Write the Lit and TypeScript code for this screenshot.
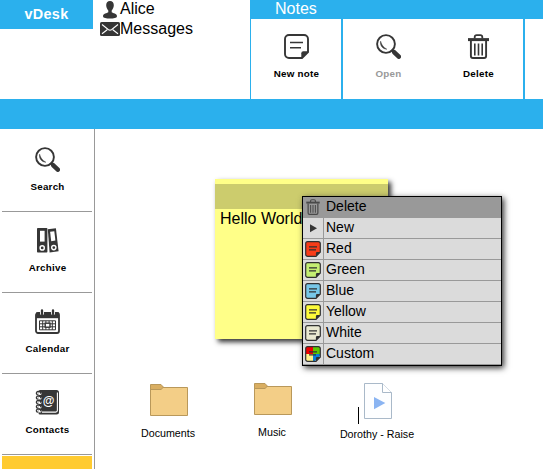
import { LitElement, html, css, svg } from "lit";
import { customElement } from "lit/decorators.js";
import { classMap } from "lit/directives/class-map.js";

const INK = "#363636";

const frame = (w: number, h: number, body: unknown) =>
  html`<svg width=${w} height=${h} viewBox="0 0 ${w} ${h}" fill="none">${body}</svg>`;

const searchIcon = frame(25, 25, svg`
  <circle cx="10" cy="10" r="8.9" stroke=${INK} stroke-width="1.9"/>
  <path d="M4.6 7.2C3.8 11.5 6.6 15 10.8 15.2C8 13.6 5.6 11.5 4.6 7.2Z" fill=${INK} stroke=${INK} stroke-width=".5"/>
  <path d="M15.5 15.8L18.5 18.6" stroke=${INK} stroke-width="2.6"/>
  <path d="M18.3 18.3L22.8 22.6" stroke=${INK} stroke-width="4.6" stroke-linecap="round"/>`);

const noteIcon = frame(25, 25, svg`
  <path d="M5 1H20A4 4 0 0 1 24 5V18L18 24H5A4 4 0 0 1 1 20V5A4 4 0 0 1 5 1Z" stroke=${INK} stroke-width="1.9"/>
  <path d="M24.5 17.3L17.3 24.5V19.3A2 2 0 0 1 19.3 17.3Z" fill=${INK}/>
  <path d="M6 8.5H19M6 13.7H17" stroke=${INK} stroke-width="1.5"/>`);

const trash = (w: number, h: number) => html`<svg width=${w} height=${h} viewBox="0 0 21 25" fill="none">
  <path d="M6.7 4.5V3A2 2 0 0 1 8.7 1.1H12.3A2 2 0 0 1 14.3 3V4.5" stroke=${INK} stroke-width="1.8"/>
  <path d="M0 5.6H21" stroke=${INK} stroke-width="3"/>
  <path d="M2.9 7V22A2 2 0 0 0 4.9 24H16.1A2 2 0 0 0 18.1 22V7" stroke=${INK} stroke-width="1.9"/>
  <path d="M6.8 9.5V21.5M10.5 9.5V21.5M14.2 9.5V21.5" stroke=${INK} stroke-width="1.6"/></svg>`;

const archiveIcon = frame(24, 25, svg`<g transform="translate(2 0)">
  <rect x="0" y="0" width="10.4" height="24.5" rx=".8" fill=${INK}/>
  <rect x="3" y="2.8" width="4.6" height="10.8" fill="#fff"/>
  <circle cx="5.2" cy="19.9" r="2.1" stroke="#fff" stroke-width="1.4"/>
  <path d="M10.8 1.2L18.9 .3L21.6 23.3L12.6 24.5Z" fill=${INK}/>
  <path d="M13.1 3.7L17.3 3.2L18.4 12.6L14.2 13.2Z" fill="#fff"/>
  <circle cx="16.8" cy="19.6" r="2.1" stroke="#fff" stroke-width="1.4"/></g>`);

const calendarIcon = frame(25, 25, svg`
  <rect x="1" y="4" width="23" height="20" rx="2" fill="#fff" stroke=${INK} stroke-width="1.8"/>
  <path d="M1 3.5H24V9.2H1Z" fill=${INK}/>
  <path d="M7 0V5.4M18 0V5.4" stroke="#fff" stroke-width="4"/>
  <path d="M7 1.3V5M18 1.3V5" stroke=${INK} stroke-width="2.3" stroke-linecap="round"/>
  <path d="M4.5 11.8H20.5V20.8H4.5ZM4.5 14.8H20.5M4.5 17.8H20.5M7.7 11.8V20.8M10.9 11.8V20.8M14.1 11.8V20.8M17.3 11.8V20.8" stroke=${INK} stroke-width="1"/>
  <rect x="10.2" y="14.2" width="4.8" height="4" fill="#fff" stroke=${INK} stroke-width="1.4"/>`);

const contactsIcon = frame(25, 25, svg`
  <path d="M5 0H21.5A2.5 2.5 0 0 1 24 2.5V22A2.5 2.5 0 0 1 21.5 24.5H5A1.5 1.5 0 0 1 3.5 23V1.5A1.5 1.5 0 0 1 5 0Z" fill=${INK}/>
  <path d="M22.4 2.5V20.3A1.8 1.8 0 0 1 20.6 22.1H7" stroke="#fff" stroke-width="1.1"/>
  ${[3.5, 8, 12.5, 17, 21].map((y) => svg`
    <circle cx="5" cy=${y} r="1.6" fill="#fff"/>
    <path d="M5.6 ${y + 0.4}A2.2 1.7 0 1 0 2.8 ${y + 1.3}" stroke=${INK} stroke-width="1.3"/>`)}
  <text x="13.6" y="15" text-anchor="middle" class="at">@</text>`);

const personIcon = frame(14, 18, svg`
  <path d="M7 0C9.5 0 11 1.8 10.8 4.6C10.7 6.7 9.7 8.5 8.7 9.5V11.3C10 12.3 14 12.5 14 15.2C14 17 10.5 17.6 7 17.6C3.5 17.6 0 17 0 15.2C0 12.5 4 12.3 5.3 11.3V9.5C4.3 8.5 3.3 6.7 3.2 4.6C3 1.8 4.5 0 7 0Z" fill=${INK}/>`);

const mailIcon = frame(20, 14, svg`
  <rect width="20" height="14" rx="1.6" fill=${INK}/>
  <path d="M2 2.5L8.2 7.5Q10 8.8 11.8 7.5L18 2.5M2 11.8L7.2 7.8M18 11.8L12.8 7.8" stroke="#fff" stroke-width="1.1"/>`);

const playIcon = frame(16, 16, svg`<path d="M5 4.3L12 8.2L5 12.2Z" fill=${INK}/>`);

const swatch = (fill: string) => frame(16, 16, svg`
  ${fill === "custom"
    ? svg`<path d="M1 1H8V8H1Z" fill="#f00000"/><path d="M8 1H15V8H8Z" fill="#5cc800"/>
          <path d="M1 8H8V15H1Z" fill="#fff38a"/><path d="M8 8H15V10L10 15H8Z" fill="#0a7fd8"/>`
    : svg`<path d="M1 1H15V10.5L10.5 15H1Z" fill=${fill}/>`}
  <path d="M4 5.9H12M4 8.9H11" stroke="#303030" stroke-width="1.1"/>
  <path d="M2.6 .7H13.4A1.9 1.9 0 0 1 15.3 2.6V11L11 15.3H2.6A1.9 1.9 0 0 1 .7 13.4V2.6A1.9 1.9 0 0 1 2.6 .7Z" stroke="#303030" stroke-width="1.2"/>
  <path d="M15.6 10.9L10.9 15.6V12.2A1.3 1.3 0 0 1 12.2 10.9Z" fill="#303030"/>`);

const folderIcon = frame(38, 32, svg`
  <path d="M.5 3.5H37.5V31.5H.5Z" fill="#f3ce87" stroke="#b9985a"/>
  <path d="M.5 .5H11L13.4 3.2L11 5.5H.5Z" fill="#d9ae62" stroke="#b9985a"/>`);

const fileIcon = frame(28, 36, svg`
  <path d="M.5 .5H18.5L27.5 9.5V35.5H.5Z" fill="#fdfeff" stroke="#a9b9c9"/>
  <path d="M18.5 .5V9.5H27.5" fill="#fff" stroke="#a9b9c9"/>
  <path d="M10 14L21.3 20L10 26.3Z" fill="#8ab4f2"/>`);

const sidebar = [
  { label: "Search", icon: searchIcon },
  { label: "Archive", icon: archiveIcon },
  { label: "Calendar", icon: calendarIcon },
  { label: "Contacts", icon: contactsIcon },
];

const menu = [
  { label: "Delete", icon: trash(14, 16), active: true },
  { label: "New", icon: playIcon },
  { label: "Red", icon: swatch("#f83c18") },
  { label: "Green", icon: swatch("#c4ee72") },
  { label: "Blue", icon: swatch("#77c7e8") },
  { label: "Yellow", icon: swatch("#fdfb3a") },
  { label: "White", icon: swatch("#e9e8d0") },
  { label: "Custom", icon: swatch("custom") },
];

@customElement("app-root")
export class AppRoot extends LitElement {
  static styles = css`
    :host { display: flex; flex-direction: column; height: 469px; overflow: hidden; background: #fff;
      color: #000; font-family: "Liberation Sans", Arial, sans-serif; font-size: 16px; }
    * { box-sizing: border-box; }
    svg { display: block; flex: none; }
    .head { display: flex; height: 99px; flex: none; }
    .brand { width: 93px; height: 29px; background: #2bb0ed; color: #fff; font-weight: bold; font-size: 14.4px;
      line-height: 29px; text-align: center; letter-spacing: .35px; }
    .user { width: 157px; padding-left: 7px; }
    .line { display: flex; height: 20px; line-height: 17px; }
    .glyph { width: 20px; height: 20px; display: flex; justify-content: center; padding-top: 1px; }
    .glyph.mail { padding-top: 2px; }
    .line.second { line-height: 18px; }
    .ribbon { flex: 1; background: #2bb0ed; padding-left: 1px; }
    .title { height: 19px; line-height: 17px; padding-left: 24px; color: #fff; }
    .groups { display: flex; gap: 2px; height: 80px; }
    .group { display: flex; background: #fff; flex: none; }
    .group.rest { flex: 1; }
    .tool { width: 90px; height: 80px; padding-top: 15px; }
    .tool, .item { display: flex; flex-direction: column; align-items: center; font-size: 9.8px; font-weight: bold; letter-spacing: .25px; }
    .tool span, .item span { margin-top: 9px; padding-left: 1px; line-height: 12px; }
    .tool.off span { color: #999; }
    .band { height: 30px; background: #2bb0ed; flex: none; }
    .body { display: flex; flex: 1; min-height: 0; }
    .side { width: 95px; border-right: 1px solid #999; padding: 2px 2px 0; }
    .item { width: 90px; height: 81px; border-bottom: 1px solid #999; padding-top: 16px; }
    .at { font: bold 12px "Liberation Sans", Arial, sans-serif; fill: #fff; letter-spacing: 0; }
    .next { width: 90px; height: 20px; margin-top: 1px; background: #ffcb31; }
    .desk { flex: 1; position: relative; }
    .note { position: absolute; left: 120px; top: 50px; width: 173px; height: 160px; background: #ffff88;
      padding-top: 5px; box-shadow: 3px 3px 5px #333; }
    .grip { height: 25px; background: #cccc6d; }
    .text { padding: 0 5px; line-height: 20px; }
    .menu { position: absolute; left: 207px; top: 67px; width: 200px; height: 170px; border: 1px solid #000;
      background: #dbdbdb; font-size: 14px; box-shadow: 2px 2px 6px #333; }
    .row { display: flex; height: 21px; border-bottom: 1px solid #999; }
    .row.active { background: #999; }
    .row.active svg { opacity: .8; }
    .cell { width: 21px; display: flex; align-items: center; justify-content: center; border-right: 1px solid #999; }
    .row span { padding-left: 2px; line-height: 19px; }
    .icon { position: absolute; width: 102px; display: flex; flex-direction: column; align-items: center;
      gap: 11px; font-size: 10.7px; line-height: 13px; }
    .icon span { margin-right: 2px; }
    .docs { left: 23px; top: 255px; }
    .music { left: 127px; top: 254px; }
    .song { left: 232px; top: 254px; gap: 9px; }
    .caret { position: absolute; left: 263px; top: 278px; width: 1px; height: 17px; background: #000; }
  `;

  render() {
    return html`
      <div class="head">
        <div class="brand">vDesk</div>
        <div class="user">
          <div class="line"><div class="glyph">${personIcon}</div>Alice</div>
          <div class="line second"><div class="glyph mail">${mailIcon}</div>Messages</div>
        </div>
        <div class="ribbon">
          <div class="title">Notes</div>
          <div class="groups">
            <div class="group"><div class="tool">${noteIcon}<span>New note</span></div></div>
            <div class="group">
              <div class="tool off">${searchIcon}<span>Open</span></div>
              <div class="tool">${trash(21, 25)}<span>Delete</span></div>
            </div>
            <div class="group rest"></div>
          </div>
        </div>
      </div>
      <div class="band"></div>
      <div class="body">
        <div class="side">
          ${sidebar.map((s) => html`<div class="item">${s.icon}<span>${s.label}</span></div>`)}
          <div class="next"></div>
        </div>
        <div class="desk">
          <div class="note"><div class="grip"></div><div class="text">Hello World</div></div>
          <div class="icon docs">${folderIcon}<span>Documents</span></div>
          <div class="icon music">${folderIcon}<span>Music</span></div>
          <div class="icon song">${fileIcon}<span>Dorothy - Raise</span></div>
          <div class="caret"></div>
          <div class="menu">
            ${menu.map((m) => html`<div class=${classMap({ row: true, active: !!m.active })}>
              <div class="cell">${m.icon}</div><span>${m.label}</span></div>`)}
          </div>
        </div>
      </div>`;
  }
}
